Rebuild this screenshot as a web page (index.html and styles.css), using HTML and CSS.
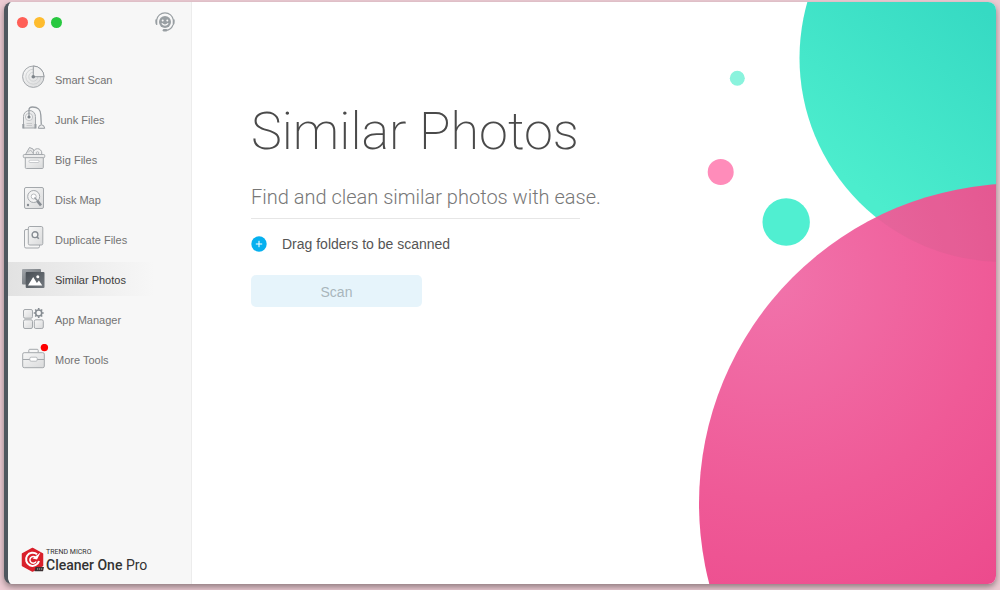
FILE: index.html
```
<!DOCTYPE html>
<html lang="en">
<head>
    <meta charset="UTF-8">
    <meta name="viewport" content="width=device-width, initial-scale=1.0">
    <title>Cleaner One Pro - Similar Photos</title>
    <link rel="stylesheet" href="styles.css">
</head>
<body>
    <div class="window">
        <aside class="sidebar">
            <div class="titlebar">
                <div class="lights">
                    <button class="light close" aria-label="Close"></button>
                    <button class="light minimize" aria-label="Minimize"></button>
                    <button class="light maximize" aria-label="Maximize"></button>
                </div>
                <button class="support" aria-label="Support">
                    <svg width="20" height="20" viewBox="0 0 20 20">
                        <g fill="none" stroke="#999fa3" stroke-width="1.2">
                            <path d="M1.6 8a8.5 8.5 0 0 1 16.8 0"/>
                            <path d="M18 13c-1.2 3-3.5 5-7 5.3"/>
                        </g>
                        <path d="M.3 7.5h2v5.5h-1q-1-1-1-3zM19.7 7.5h-2v5.5h1q1-1 1-3z" fill="#999fa3"/>
                        <circle cx="10" cy="10" r="6" fill="#999fa3"/>
                        <circle cx="7.7" cy="8.5" r="1" fill="#f7f7f7"/>
                        <circle cx="12.3" cy="8.5" r="1" fill="#f7f7f7"/>
                        <path d="M6.8 11.4q3.2 3.4 6.4 0" fill="none" stroke="#f7f7f7" stroke-width="1.3"/>
                        <rect x="7.7" y="17" width="4.6" height="2.6" rx="1.3" fill="#999fa3"/>
                    </svg>
                </button>
            </div>

            <nav class="menu">
                <a href="#smart-scan" class="menu-item">
                    <svg class="icon" viewBox="0 0 28 30">
                        <circle cx="12.3" cy="12.7" r="10.7" fill="url(#metal)" stroke="#a4a8ac"/>
                        <circle cx="12.3" cy="12.7" r="7.5" fill="none" stroke="#c9cbcd" stroke-width=".8"/>
                        <circle cx="12.3" cy="12.7" r="4.5" fill="none" stroke="#c9cbcd" stroke-width=".8"/>
                        <path d="M12.3 12.7V2A10.7 10.7 0 0 1 23 12.7z" fill="#f1f1f1" stroke="#979ca1"/>
                        <circle cx="12.3" cy="12.7" r="1.8" fill="#7e848a"/>
                    </svg>
                    <span>Smart Scan</span>
                </a>
                <a href="#junk-files" class="menu-item">
                    <svg class="icon" viewBox="0 0 28 30">
                        <path d="M2.5 24V12.5a6 6 0 0 1 12 0V24z" fill="url(#metal)" stroke="#a4a8ac"/>
                        <path d="M1.3 20v4.5h2V20zM13.5 20v4.5h2V20z" fill="#979ca1"/>
                        <circle cx="8" cy="13" r="3.6" fill="#f5f5f5" stroke="#b5b8bb" stroke-width=".8"/>
                        <path d="M8 12.5V6q0-3 3.5-3c6 0 8 2.5 8.3 8l.5 9.5" fill="none" stroke="#979ca1" stroke-width="1.3"/>
                        <circle cx="8" cy="13" r="1.6" fill="#7e848a"/>
                        <path d="M5.5 19.5h5.5M5.5 21.5h5.5" stroke="#c0c2c4" stroke-width=".8"/>
                        <path d="M17.3 24.3q.5-3.5 3.2-3.5t3.2 3.5z" fill="#eee" stroke="#979ca1"/>
                    </svg>
                    <span>Junk Files</span>
                </a>
                <a href="#big-files" class="menu-item">
                    <svg class="icon" viewBox="0 0 28 30">
                        <path d="M4.5 10.5l4-7 3.5 1.5 3 5.5z" fill="#e9e9e9" stroke="#a4a8ac"/>
                        <circle cx="16.5" cy="9" r="4.3" fill="#f1f1f1" stroke="#a4a8ac"/>
                        <circle cx="16.5" cy="9" r="1.3" fill="none" stroke="#a9adb1" stroke-width=".8"/>
                        <path d="M7 8.5l2.5-2.5 2.5 3" fill="none" stroke="#a9adb1" stroke-width=".8"/>
                        <rect x="4.3" y="13" width="18" height="11.5" rx="1" fill="url(#metal)" stroke="#a4a8ac"/>
                        <rect x="2.3" y="10.5" width="21.4" height="3.2" rx="1" fill="#ececec" stroke="#a4a8ac"/>
                        <rect x="8" y="16.2" width="10" height="2.3" rx="1" fill="#fff" stroke="#b5b8bb" stroke-width=".7"/>
                    </svg>
                    <span>Big Files</span>
                </a>
                <a href="#disk-map" class="menu-item">
                    <svg class="icon" viewBox="0 0 28 30">
                        <rect x="3.5" y="3.5" width="19" height="21" rx="1.5" fill="url(#metal)" stroke="#a4a8ac"/>
                        <circle cx="12.7" cy="12.5" r="6" fill="#f3f3f3" stroke="#a4a8ac"/>
                        <circle cx="12.7" cy="12.5" r="2.5" fill="#fff" stroke="#a9adb1" stroke-width=".8"/>
                        <path d="M13.5 13.5l4 4.3" stroke="#979ca1" stroke-width="1.3"/>
                        <path d="M16.3 16.8l3.7 4.5" stroke="#868c92" stroke-width="2.6"/>
                        <circle cx="7" cy="21" r="1.2" fill="#868c92"/>
                    </svg>
                    <span>Disk Map</span>
                </a>
                <a href="#duplicate-files" class="menu-item">
                    <svg class="icon" viewBox="0 0 28 30">
                        <rect x="3.5" y="5.5" width="15" height="18.5" rx="1.5" fill="#f5f5f5" stroke="#a4a8ac"/>
                        <rect x="7.3" y="2.5" width="14.5" height="18.5" rx="1.5" fill="url(#metal)" stroke="#a4a8ac"/>
                        <circle cx="14" cy="10.7" r="2.9" fill="#f5f5f5" stroke="#868c92" stroke-width="1.4"/>
                        <path d="M15.8 12.7l2 2" stroke="#868c92" stroke-width="1.6"/>
                    </svg>
                    <span>Duplicate Files</span>
                </a>
                <a href="#similar-photos" class="menu-item active" aria-current="page">
                    <svg class="icon" viewBox="0 0 28 30">
                        <rect x="1" y="5" width="19" height="15.5" rx="1" fill="url(#photoBack)"/>
                        <rect x="4.7" y="8" width="18.8" height="16" rx="1" fill="url(#photoFront)"/>
                        <path d="M7 21.5l5.2-8.5 3.7 6 2-2.5 3.4 5z" fill="#fff"/>
                        <circle cx="16.8" cy="12.8" r="1.5" fill="#fff"/>
                    </svg>
                    <span>Similar Photos</span>
                </a>
                <a href="#app-manager" class="menu-item">
                    <svg class="icon" viewBox="0 0 28 30">
                        <g fill="url(#metal)" stroke="#a4a8ac">
                            <rect x="2.5" y="5.5" width="9" height="8.7" rx="1.5"/>
                            <rect x="2.5" y="15.8" width="9" height="8.7" rx="1.5"/>
                            <rect x="13.3" y="15.8" width="9" height="8.7" rx="1.5"/>
                        </g>
                        <circle cx="17.7" cy="9" r="3" fill="none" stroke="#868c92" stroke-width="1.5"/>
                        <path d="M17.7 4v1.8M17.7 12.2V14M12.7 9h1.8M20.9 9h1.8M14.2 5.5l1.2 1.2M20 11.3l1.2 1.2M14.2 12.5l1.2-1.2M20 6.7l1.2-1.2" stroke="#868c92" stroke-width="1.6"/>
                    </svg>
                    <span>App Manager</span>
                </a>
                <a href="#more-tools" class="menu-item">
                    <svg class="icon" viewBox="0 0 28 30">
                        <path d="M7.8 8.5V6.3q0-1 1-1h7.4q1 0 1 1v2.2" fill="none" stroke="#a4a8ac"/>
                        <rect x="1.7" y="8.7" width="21.6" height="15" rx="1.5" fill="url(#metal)" stroke="#a4a8ac"/>
                        <path d="M2 15.5h21" stroke="#a4a8ac"/>
                        <rect x="8.8" y="13.2" width="7.4" height="4" rx="1.3" fill="#fff" stroke="#a9adb1" stroke-width=".8"/>
                        <circle cx="23.4" cy="3.6" r="3.7" fill="#fe0000"/>
                    </svg>
                    <span>More Tools</span>
                </a>
            </nav>

            <div class="brand">
                <svg class="brand-logo" width="24" height="26" viewBox="0 0 24 26">
                    <path d="M11.5 1.5L21.5 7v11.5L11.5 24 1.5 18.5V7z" fill="#d9202b" stroke="#d9202b" stroke-width="1.5" stroke-linejoin="round"/>
                    <path d="M16 7.3A6.6 6.6 0 1 0 18 14" fill="none" stroke="#fff" stroke-width="2"/>
                    <path d="M14.5 10.5a3.3 3.3 0 1 0 .6 4" fill="none" stroke="#fff" stroke-width="1.5"/>
                    <path d="M11.5 11.5l8-6-3.5 7z" fill="#fff"/>
                    <path d="M14.5 20h8.5l-1 4.2h-8.5z" fill="#3c3032"/>
                    <path d="M16 22h5.5" stroke="#bbb" stroke-dasharray="1.2 .8"/>
                </svg>
                <div class="brand-text">
                    <div class="brand-company">TREND MICRO</div>
                    <div class="brand-name"><b>Cleaner One</b> Pro</div>
                </div>
            </div>
        </aside>

        <main class="content">
            <h1>Similar Photos</h1>
            <p class="subtitle">Find and clean similar photos with ease.</p>
            <button class="add-folder">
                <svg width="16" height="16" viewBox="0 0 16 16">
                    <circle cx="8" cy="8" r="7.7" fill="#06b0ef"/>
                    <path d="M8 4.8v6.4M4.8 8h6.4" stroke="#fff"/>
                </svg>
                <span>Drag folders to be scanned</span>
            </button>
            <button class="scan" disabled>Scan</button>
        </main>

        <svg class="bubbles" viewBox="696 2 300 582" preserveAspectRatio="xMaxYMin slice" aria-hidden="true">
            <defs>
                <linearGradient id="metal" x1="0" y1="0" x2="1" y2="1">
                    <stop offset="0" stop-color="#f8f8f8"/>
                    <stop offset="1" stop-color="#d9dadb"/>
                </linearGradient>
                <linearGradient id="photoBack" x1="0" y1="0" x2="1" y2="1">
                    <stop offset="0" stop-color="#a3a7ab"/>
                    <stop offset="1" stop-color="#5c6268"/>
                </linearGradient>
                <linearGradient id="photoFront" x1="0" y1="0" x2="1" y2="1">
                    <stop offset="0" stop-color="#474d53"/>
                    <stop offset="1" stop-color="#747a80"/>
                </linearGradient>
                <linearGradient id="teal" gradientUnits="userSpaceOnUse" x1="860" y1="190" x2="996" y2="20">
                    <stop offset="0" stop-color="#4cedcd"/>
                    <stop offset="1" stop-color="#36dac3"/>
                </linearGradient>
                <radialGradient id="pink" gradientUnits="userSpaceOnUse" cx="772" cy="280" r="400">
                    <stop offset="0" stop-color="#f173ab"/>
                    <stop offset=".55" stop-color="#ef5a97"/>
                    <stop offset="1" stop-color="#ec488b"/>
                </radialGradient>
                <clipPath id="tealClip"><circle cx="1003.5" cy="58" r="204"/></clipPath>
            </defs>
            <circle cx="1003.5" cy="58" r="204" fill="url(#teal)"/>
            <circle cx="1019" cy="503.5" r="320" fill="url(#pink)"/>
            <circle cx="1019" cy="503.5" r="320" fill="#b0607f" opacity=".15" clip-path="url(#tealClip)"/>
            <circle cx="737.3" cy="78.2" r="7.5" fill="#8af3dd"/>
            <circle cx="720.7" cy="172" r="13" fill="#ff8cba"/>
            <circle cx="786.2" cy="222" r="23.7" fill="#50efd1"/>
        </svg>
    </div>
</body>
</html>
```
FILE: styles.css
```
* {
    box-sizing: border-box;
}

body {
    margin: 0;
    padding: 2px 4px 6px;
    min-height: 100vh;
    display: flex;
    background-color: #eccbd3;
    font-family: "Liberation Sans", Arial, sans-serif;
    color: #4a4a4a;
}

button {
    padding: 0;
    border: none;
    background: none;
    font-family: inherit;
    cursor: pointer;
}

.window {
    position: relative;
    flex: 1;
    display: flex;
    overflow: hidden;
    background-color: white;
    border-left: 4px solid #4f575f;
    border-radius: 8px;
    box-shadow: 0 3px 6px rgba(0,0,0,0.4);
}

/* sidebar */
.sidebar {
    width: 184px;
    flex-shrink: 0;
    display: flex;
    flex-direction: column;
    background-color: #f7f7f7;
    border-right: 1px solid #ececec;
}

.titlebar {
    display: flex;
    justify-content: space-between;
    align-items: center;
    height: 40px;
    padding: 0 16px 0 9px;
}

.lights {
    display: flex;
    gap: 6px;
}

.light {
    width: 11px;
    height: 11px;
    border-radius: 50%;
}

.close {
    background-color: #ff5f57;
}

.minimize {
    background-color: #febc2e;
}

.maximize {
    background-color: #28c840;
}

.support svg {
    display: block;
}

.menu {
    display: flex;
    flex-direction: column;
    gap: 6px;
    margin-top: 20px;
}

.menu-item {
    display: flex;
    align-items: center;
    gap: 6px;
    height: 34px;
    padding-left: 13px;
    font-size: 11px;
    color: #737373;
    text-decoration: none;
}

.menu-item span {
    padding-top: 1px;
}

.menu-item.active {
    background: linear-gradient(to right, #e2e2e2, #f7f7f7 80%);
    color: #3c3c3c;
}

.icon {
    width: 28px;
    height: 30px;
}

.brand {
    display: flex;
    align-items: center;
    gap: 1px;
    margin-top: auto;
    padding: 0 0 11px 13px;
}

.brand-text {
    font-family: Roboto, sans-serif;
    color: #333;
}

.brand-company {
    font-size: 7px;
    line-height: 9px;
}

.brand-name {
    font-size: 14px;
    line-height: 16px;
}

.brand-name b {
    font-weight: 500;
}

/* main panel */
.content {
    flex: 1;
    display: flex;
    flex-direction: column;
    align-items: flex-start;
    padding: 98px 0 0 59px;
}

h1 {
    margin: 0;
    font-family: Roboto, sans-serif;
    font-size: 52px;
    font-weight: 200;
    line-height: 64px;
}

.subtitle {
    width: 329px;
    margin: 21px 0 0;
    padding-bottom: 9px;
    border-bottom: 1px solid #e6e6e6;
    font-family: Roboto, sans-serif;
    font-size: 20px;
    font-weight: 300;
    line-height: 24px;
    white-space: nowrap;
    color: #777;
}

.add-folder {
    display: flex;
    align-items: center;
    gap: 15px;
    margin-top: 15px;
    font-size: 14px;
    line-height: 20px;
    color: #555;
}

.scan {
    width: 171px;
    height: 32px;
    padding-top: 2px;
    margin-top: 21px;
    border-radius: 5px;
    background-color: #e6f4fb;
    font-size: 14px;
    color: #a9b6bc;
    cursor: default;
}

.bubbles {
    position: absolute;
    top: 0;
    right: 0;
    width: 300px;
    height: 100%;
    pointer-events: none;
}
```
